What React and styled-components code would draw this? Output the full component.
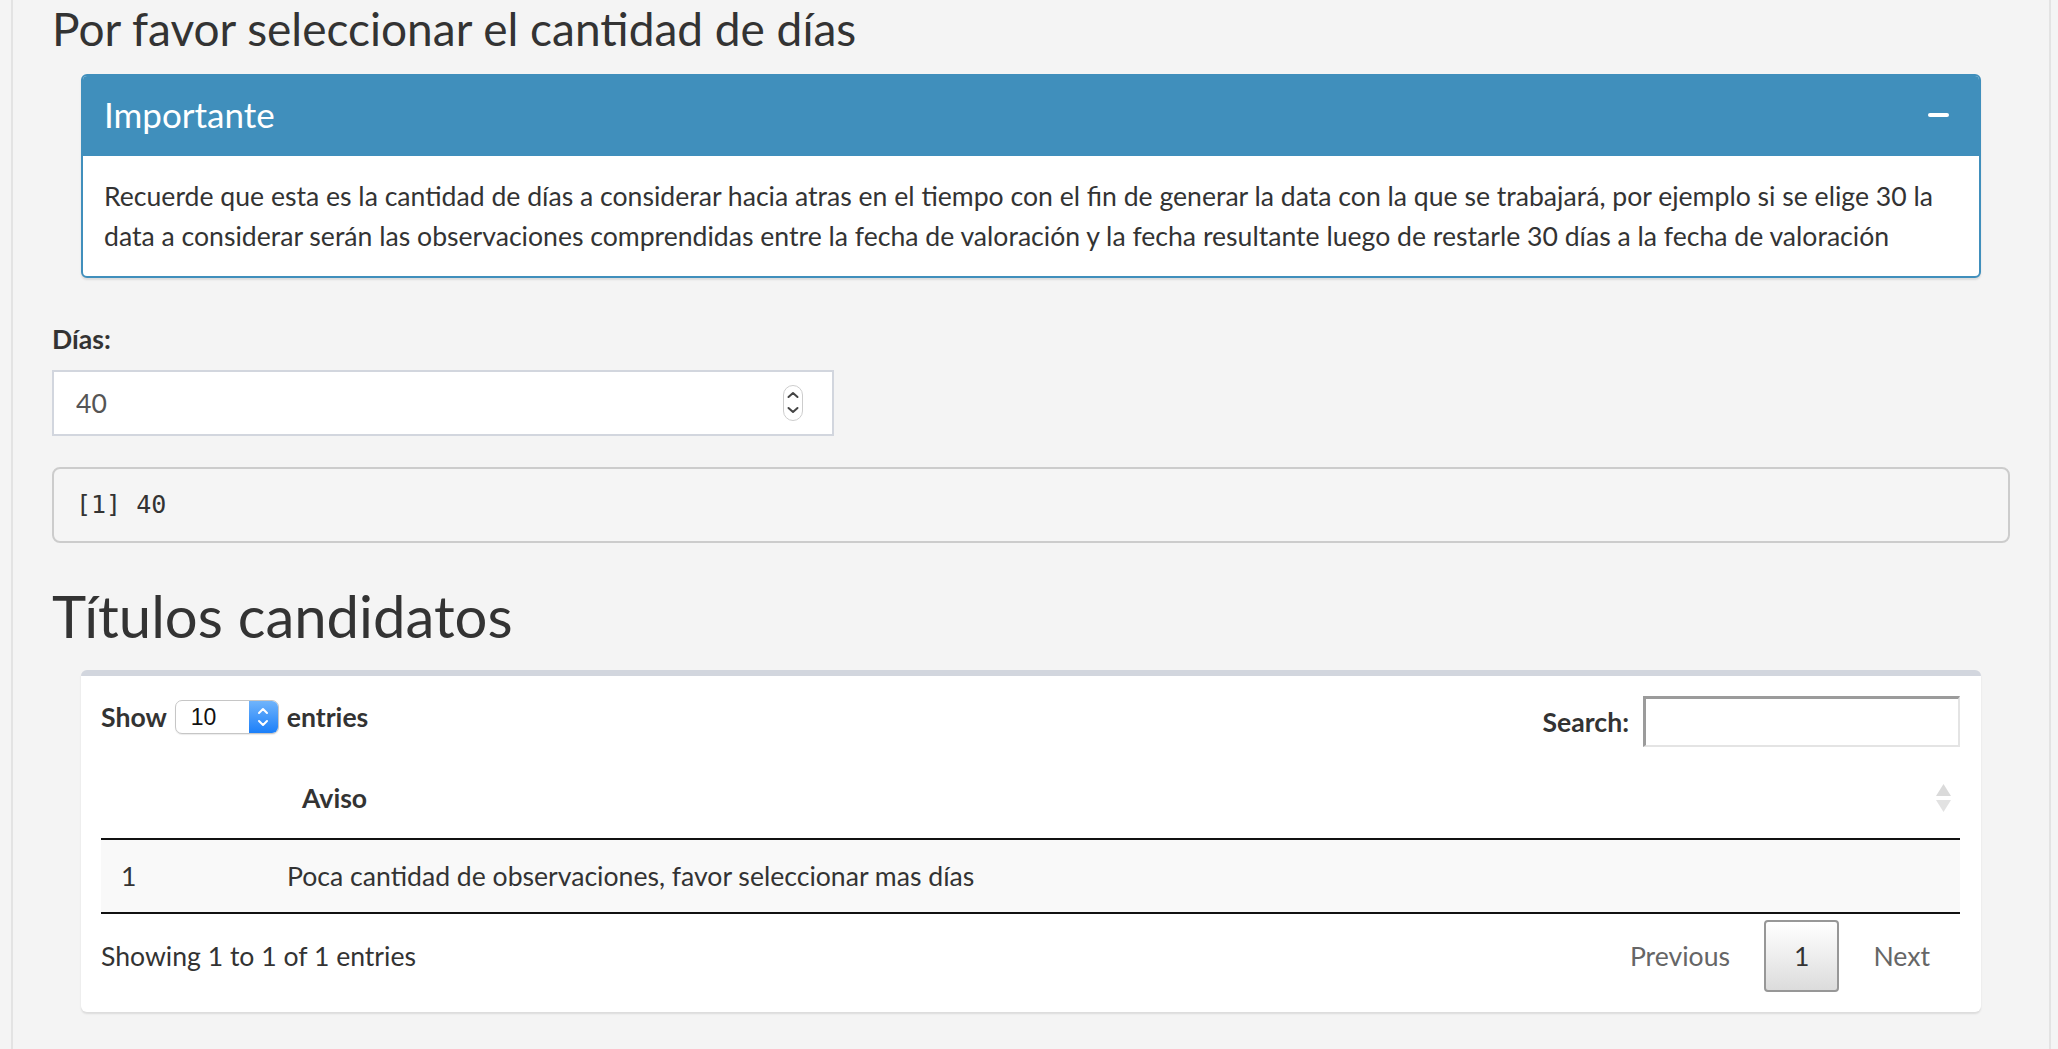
import React from "react";
import styled, { createGlobalStyle } from "styled-components";

const GlobalStyle = createGlobalStyle`
  html, body {
    margin: 0;
    padding: 0;
    background: #f4f4f4;
  }
  body {
    font-family: Lato, "Noto Sans", sans-serif;
    color: #333;
  }
  * {
    box-sizing: border-box;
  }
`;

const Page = styled.div`
  min-height: 100vh;
  margin: 0 7px 0 11px;
  padding: 4px 39px 0 39px;
  border-left: 2px solid #e3e3e3;
  border-right: 2px solid #e3e3e3;
`;

const Heading = styled.h3`
  margin: ${(p) => p.$top || 0}px 0 0;
  font-size: ${(p) => p.$size}px;
  font-weight: 400;
  line-height: 1.1;
  color: #333;
`;

const Box = styled.section`
  margin: ${(p) => p.$top || 0}px 29px 0;
  background: #fff;
  border-radius: 6px;
  box-shadow: 0 2px 2px rgba(0, 0, 0, 0.1);
  overflow: hidden;
`;

const InfoBox = styled(Box)`
  border: 2px solid #408fbc;
`;

const BoxHeader = styled.div`
  height: 80px;
  display: flex;
  align-items: center;
  justify-content: space-between;
  padding: 0 30px 4px 21px;
  background: #408fbc;
  color: #fff;
`;

const BoxTitle = styled.h4`
  margin: 0;
  font-size: 35px;
  font-weight: 400;
`;

const Minus = styled.span`
  width: 21px;
  height: 4px;
  margin-top: 2px;
  border-radius: 2px;
  background: #fff;
`;

const BoxBody = styled.div`
  padding: 20px 21px;
  font-size: 26.6px;
  line-height: 40px;
  color: #333;
`;

const Label = styled.label`
  display: block;
  margin-top: 41px;
  margin-bottom: 11px;
  font-size: 26.6px;
  line-height: 40px;
  font-weight: 700;
`;

const NumberField = styled.div`
  width: 782px;
  height: 66px;
  display: flex;
  align-items: center;
  padding: 0 29px 0 22px;
  background: #fff;
  border: 2px solid #d2d6de;
`;

const NumberInput = styled.input`
  flex: 1;
  border: 0;
  outline: none;
  background: transparent;
  padding: 0;
  font-family: Lato, "Noto Sans", sans-serif;
  font-size: 26.6px;
  color: #555;
`;

const Verbatim = styled.pre`
  margin: 31px 0 0;
  height: 76px;
  display: flex;
  align-items: center;
  padding: 0 22px;
  background: #f5f5f5;
  border: 2px solid #ccc;
  border-radius: 8px;
  font-family: "DejaVu Sans Mono", "Liberation Mono", monospace;
  font-size: 25px;
  color: #333;
`;

const DataBox = styled(Box)`
  border-top: 6px solid #d2d6de;
  padding: 20px 21px 20px 20px;
`;

const Controls = styled.div`
  height: 51px;
  display: flex;
  align-items: flex-start;
  justify-content: space-between;
`;

const ControlLabel = styled.label`
  display: flex;
  align-items: center;
  height: ${(p) => p.$height || 40}px;
  margin-top: ${(p) => p.$top || 0}px;
  font-size: 26.6px;
  font-weight: 700;
  color: #333;
`;

const Select = styled.div`
  width: 104px;
  height: 34px;
  display: flex;
  margin: 0 8px 0 8px;
  background: #fff;
  border: 1px solid #c6c6c6;
  border-radius: 7px;
  overflow: hidden;
  box-shadow: 0 1px 1px rgba(0, 0, 0, 0.08);
`;

const SelectValue = styled.span`
  flex: 1;
  display: flex;
  align-items: center;
  padding-left: 15px;
  font-family: "Liberation Sans", Arial, sans-serif;
  font-size: 23px;
  font-weight: 400;
  color: #111;
`;

const SelectArrows = styled.span`
  width: 29px;
  display: flex;
  align-items: center;
  justify-content: center;
  background: linear-gradient(#70b4fb, #1b7ff9);
`;

const SearchInput = styled.input`
  width: 317px;
  height: 51px;
  margin-left: 14px;
  border-style: solid;
  border-width: 3px 2px 2px 3px;
  border-color: #9b9b9b #e4e4e4 #e4e4e4 #9b9b9b;
  background: #fff;
  font-size: 26px;
  outline: none;
`;

const Table = styled.table`
  width: 100%;
  margin-top: 11px;
  border-collapse: collapse;
  font-size: 26.6px;
  line-height: 40px;
  color: #333;
`;

const Th = styled.th`
  width: ${(p) => p.$width || "auto"};
  padding: 20px 8px 20px 35px;
  text-align: left;
  font-weight: 700;
  border-bottom: 2px solid #111;
`;

const HeadCell = styled.div`
  display: flex;
  align-items: center;
  justify-content: space-between;
`;

const Row = styled.tr`
  background: #f9f9f9;
`;

const Td = styled.td`
  padding: 16px 20px;
  font-weight: 400;
  border-bottom: 2px solid #111;
`;

const Footer = styled.div`
  display: flex;
  align-items: center;
  justify-content: space-between;
  margin-top: 6px;
  font-size: 26.6px;
  line-height: 40px;
  color: #333;
`;

const Pager = styled.div`
  display: flex;
  align-items: center;
`;

const PageButton = styled.span`
  margin-left: 4px;
  padding: 14px 28px;
  border: 2px solid ${(p) => (p.$current ? "#979797" : "transparent")};
  border-radius: 4px;
  color: ${(p) => (p.$current ? "#333" : "#666")};
  background: ${(p) =>
    p.$current ? "linear-gradient(#ffffff 0%, #dcdcdc 100%)" : "transparent"};
`;

const Spinner = () => (
  <svg width="20" height="36" viewBox="0 0 20 36">
    <rect x="0.5" y="0.5" width="19" height="35" rx="9.5" fill="#fff" stroke="#cdcdcd" />
    <path d="M5.5 12 L10 8 L14.5 12" stroke="#444" strokeWidth="2" fill="none" strokeLinecap="round" strokeLinejoin="round" />
    <path d="M5.5 23 L10 27 L14.5 23" stroke="#444" strokeWidth="2" fill="none" strokeLinecap="round" strokeLinejoin="round" />
  </svg>
);

const Stepper = () => (
  <svg width="14" height="26" viewBox="0 0 14 26">
    <path d="M3 9 L7 5 L11 9" stroke="#fff" strokeWidth="2" fill="none" strokeLinecap="round" strokeLinejoin="round" />
    <path d="M3 17 L7 21 L11 17" stroke="#fff" strokeWidth="2" fill="none" strokeLinecap="round" strokeLinejoin="round" />
  </svg>
);

const SortBoth = () => (
  <svg width="17" height="28" viewBox="0 0 17 28">
    <path d="M8.5 0 L16 12 L1 12 Z" fill="#dadada" />
    <path d="M1 16 L16 16 L8.5 28 Z" fill="#e2e2e2" />
  </svg>
);

export default function App() {
  return (
    <>
      <GlobalStyle />
      <Page>
        <Heading $size={46}>Por favor seleccionar el cantidad de días</Heading>

        <InfoBox $top={19}>
          <BoxHeader>
            <BoxTitle>Importante</BoxTitle>
            <Minus />
          </BoxHeader>
          <BoxBody>
            Recuerde que esta es la cantidad de días a considerar hacia atras en el tiempo con el fin
            de generar la data con la que se trabajará, por ejemplo si se elige 30 la data a
            considerar serán las observaciones comprendidas entre la fecha de valoración y la fecha
            resultante luego de restarle 30 días a la fecha de valoración
          </BoxBody>
        </InfoBox>

        <Label htmlFor="dias">Días:</Label>
        <NumberField>
          <NumberInput id="dias" type="text" defaultValue="40" />
          <Spinner />
        </NumberField>

        <Verbatim>[1] 40</Verbatim>

        <Heading $size={58} $top={41}>Títulos candidatos</Heading>

        <DataBox $top={23}>
          <Controls>
            <ControlLabel $top={1}>
              Show
              <Select>
                <SelectValue>10</SelectValue>
                <SelectArrows>
                  <Stepper />
                </SelectArrows>
              </Select>
              entries
            </ControlLabel>
            <ControlLabel $height={51}>
              Search:
              <SearchInput type="search" />
            </ControlLabel>
          </Controls>

          <Table>
            <thead>
              <tr>
                <Th $width="166px" />
                <Th>
                  <HeadCell>
                    Aviso
                    <SortBoth />
                  </HeadCell>
                </Th>
              </tr>
            </thead>
            <tbody>
              <Row>
                <Td>1</Td>
                <Td>Poca cantidad de observaciones, favor seleccionar mas días</Td>
              </Row>
            </tbody>
          </Table>

          <Footer>
            <span>Showing 1 to 1 of 1 entries</span>
            <Pager>
              <PageButton>Previous</PageButton>
              <PageButton $current>1</PageButton>
              <PageButton>Next</PageButton>
            </Pager>
          </Footer>
        </DataBox>
      </Page>
    </>
  );
}
